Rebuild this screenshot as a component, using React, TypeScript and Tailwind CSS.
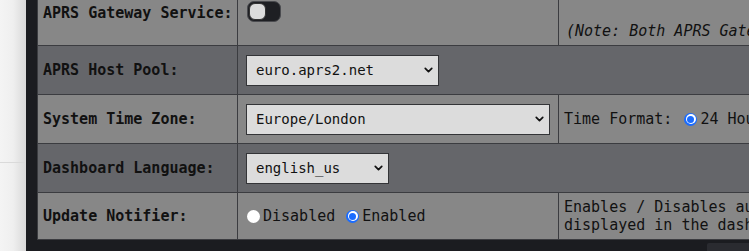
import { ChevronDown } from 'lucide-react';

const mono = { fontFamily: '"DejaVu Sans Mono", "Liberation Mono", monospace' };

function Select({ value, width, options }: { value: string; width: string; options: string[] }) {
  return (
    <div className={`relative ${width}`}>
      <select
        defaultValue={value}
        className="h-[31px] w-full appearance-none rounded-none border border-[#333437] bg-[#dcdcdc] pl-[9px] pr-6 text-[14px] text-[#111] outline-none"
        style={mono}
      >
        {options.map((o) => (
          <option key={o}>{o}</option>
        ))}
      </select>
      <ChevronDown
        className="pointer-events-none absolute right-[4px] top-1/2 h-[13px] w-[13px] -translate-y-1/2 text-[#111]"
        strokeWidth={3.2}
      />
    </div>
  );
}

function Radio({ checked, label }: { checked?: boolean; label: string }) {
  return (
    <label className="flex items-center gap-[3px]">
      {checked ? (
        <span className="flex h-[13px] w-[13px] items-center justify-center rounded-full bg-[#1a6cff]">
          <span className="flex h-[10px] w-[10px] items-center justify-center rounded-full bg-white">
            <span className="h-[7px] w-[7px] rounded-full bg-[#1a6cff]" />
          </span>
        </span>
      ) : (
        <span className="h-[13px] w-[13px] rounded-full bg-white" />
      )}
      <span>{label}</span>
    </label>
  );
}

export default function App() {
  const label = 'w-[200px] shrink-0 border-r border-[#3b3c40] pl-[5px] font-bold';
  return (
    <div className="flex h-[251px] w-[749px] overflow-hidden whitespace-nowrap text-[15px] text-[#111]" style={mono}>
      {/* Page behind the panel */}
      <div className="flex w-[26px] shrink-0 flex-col bg-gradient-to-r from-[#f4f4f4] via-[#efefef] to-[#d9d9d9]">
        <div className="h-[163px] border-b border-[#dadada]" />
      </div>

      {/* Config panel */}
      <div className="flex min-w-0 flex-1 flex-col bg-[#1b1c20] pl-[11px]">
        <div className="w-[1200px] border-l border-[#3b3c40]">
          {/* APRS Gateway Service */}
          <div className="flex h-[46px] border-b border-[#3b3c40] bg-[#878787]">
            <div className={`${label} pt-[4px] leading-[18px]`}>APRS Gateway Service:</div>
            <div className="w-[321px] shrink-0 border-r border-[#3b3c40] pl-[9px] pt-[1px]">
              <div className="flex h-[21px] w-[34px] items-center rounded-[7px] border border-[#4a4b4f] bg-[#1e1f23] pl-[1px]">
                <span className="h-[17px] w-[17px] rounded-[6px] border border-[#333] bg-[#dcdcdc]" />
              </div>
            </div>
            <div className="flex-1 pl-[7px] pt-[22px] italic leading-[18px]">
              (Note: Both APRS Gateway and APRS Host Pool are required)
            </div>
          </div>

          {/* APRS Host Pool */}
          <div className="flex h-[49px] border-b border-[#3b3c40] bg-[#65666a]">
            <div className={`${label} flex items-center`}>APRS Host Pool:</div>
            <div className="flex flex-1 items-center pl-[8px]">
              <Select
                value="euro.aprs2.net"
                width="w-[193px]"
                options={['euro.aprs2.net', 'noam.aprs2.net', 'rotate.aprs2.net']}
              />
            </div>
          </div>

          {/* System Time Zone */}
          <div className="flex h-[49px] border-b border-[#3b3c40] bg-[#878787]">
            <div className={`${label} flex items-center`}>System Time Zone:</div>
            <div className="flex w-[321px] shrink-0 items-center border-r border-[#3b3c40] pl-[8px]">
              <Select value="Europe/London" width="w-[304px]" options={['Europe/London', 'Europe/Paris', 'UTC']} />
            </div>
            <div className="flex flex-1 items-center gap-[12px] pl-[5px]">
              <span>Time Format:</span>
              <div className="flex gap-3">
                <Radio checked label="24 Hour" />
                <Radio label="12 Hour" />
              </div>
            </div>
          </div>

          {/* Dashboard Language */}
          <div className="flex h-[49px] border-b border-[#3b3c40] bg-[#65666a]">
            <div className={`${label} flex items-center`}>Dashboard Language:</div>
            <div className="flex flex-1 items-center pl-[8px]">
              <Select value="english_us" width="w-[143px]" options={['english_us', 'english_uk', 'deutsch']} />
            </div>
          </div>

          {/* Update Notifier */}
          <div className="flex h-[47px] border-b border-[#3b3c40] bg-[#878787]">
            <div className={`${label} flex items-center`}>Update Notifier:</div>
            <div className="flex w-[321px] shrink-0 items-center gap-[11px] border-r border-[#3b3c40] pl-[9px]">
              <Radio label="Disabled" />
              <Radio checked label="Enabled" />
            </div>
            <div className="flex flex-1 flex-col justify-center pl-[5px] leading-[18px]">
              <span>Enables / Disables automatic update checks,</span>
              <span>displayed in the dashboard header</span>
            </div>
          </div>
        </div>

        <div className="flex flex-1 items-end">
          <div className="ml-[670px] h-[8px] w-[60px] rounded-tl-[2px] bg-[#2a2b30]" />
        </div>
      </div>
    </div>
  );
}
